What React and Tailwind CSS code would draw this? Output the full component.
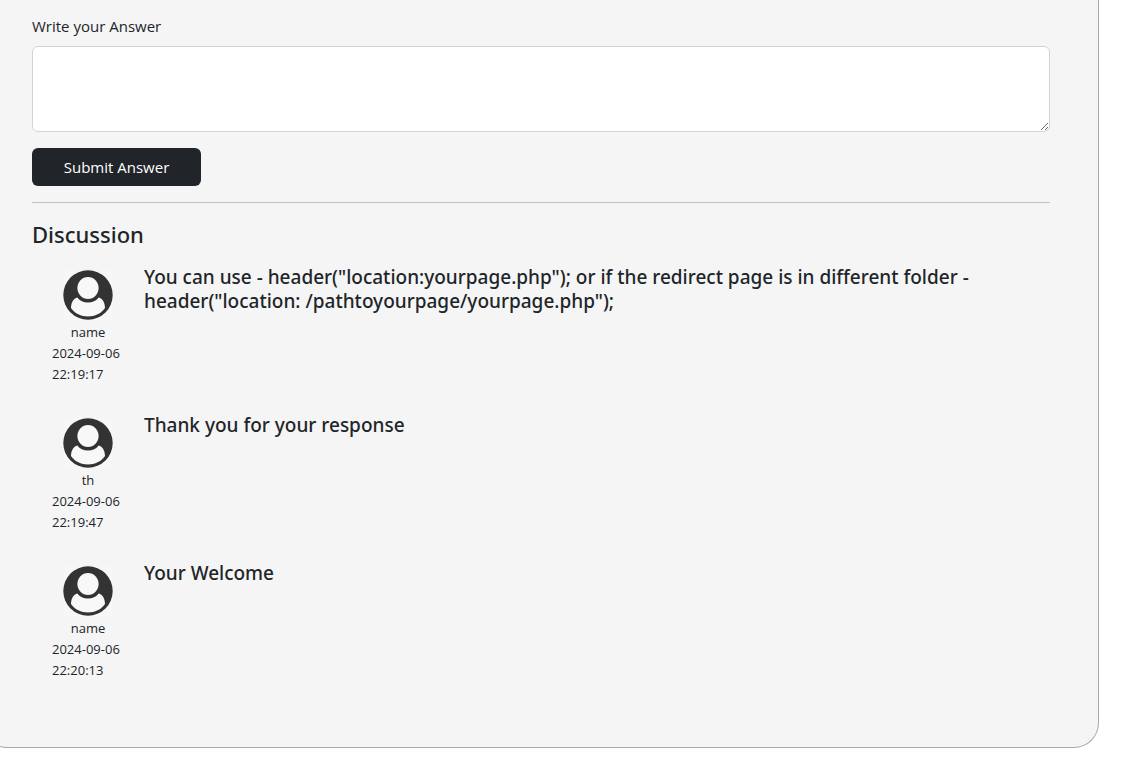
const answers = [
  {
    id: 1,
    author: 'name',
    postedAt: '2024-09-06 22:19:17',
    text: 'You can use - header("location:yourpage.php"); or if the redirect page is in different folder - header("location: /pathtoyourpage/yourpage.php");',
  },
  { id: 2, author: 'th', postedAt: '2024-09-06 22:19:47', text: 'Thank you for your response' },
  { id: 3, author: 'name', postedAt: '2024-09-06 22:20:13', text: 'Your Welcome' },
];

function Avatar() {
  return (
    <svg viewBox="0 0 50 50" className="size-[50px] bg-[#f7f7f7]" aria-hidden="true">
      <circle cx="25" cy="25" r="24.7" fill="#333333" />
      <path
        d="M14.3 27.6 C16.8 30.8 20.4 32.6 25 32.6 C29.6 32.6 33.2 30.8 35.7 27.6 C39.4 28.4 41.9 32.6 42 38 C38 43.7 32 46.4 25 46.4 C18 46.4 12 43.7 8 38 C8.1 32.6 10.6 28.4 14.3 27.6 Z"
        fill="#f8f8f8"
      />
      <ellipse cx="25" cy="18.2" rx="12.6" ry="13" fill="#333333" />
      <ellipse cx="25" cy="18" rx="10.6" ry="11" fill="#f8f8f8" />
    </svg>
  );
}

function Answer({ author, postedAt, text }) {
  return (
    <article className="flex min-h-[148px] items-start">
      <div className="flex w-28 shrink-0 flex-col items-center px-5 pt-[5px] text-[13px] leading-[21px]">
        <Avatar />
        <span className="mt-0.5">{author}</span>
        <time className="w-full">{postedAt}</time>
      </div>
      <h5 className="font-['Noto_Sans',sans-serif] text-[19px] leading-6 font-medium">{text}</h5>
    </article>
  );
}

export default function App() {
  return (
    <div className="overflow-x-hidden bg-white font-['Open_Sans','Noto_Sans',sans-serif] text-[#212529]">
      <main className="mr-[33px] -ml-[18px] rounded-b-[25px] border border-t-0 border-[#a9a9a9] bg-[#f5f5f5] pt-3.5 pr-12 pb-[38px] pl-[49px]">
        <form onSubmit={(event) => event.preventDefault()}>
          <label htmlFor="answer" className="mb-2 block text-[15px] leading-6">
            Write your Answer
          </label>
          <textarea
            id="answer"
            rows={3}
            className="block w-full resize-y rounded-md border border-[#ced4da] bg-white px-3 py-1.5 text-base leading-6"
          />
          <button
            type="submit"
            className="mt-4 block h-[38px] w-[169px] rounded-md bg-[#212529] text-[15px] leading-6 text-white"
          >
            Submit Answer
          </button>
        </form>
        <hr className="my-4 border-[#c0c1c2]" />
        <section>
          <h4 className="mb-4 font-['Noto_Sans',sans-serif] text-[22px] leading-[30px] font-medium">Discussion</h4>
          {answers.map((answer) => (
            <Answer key={answer.id} {...answer} />
          ))}
        </section>
      </main>
    </div>
  );
}
